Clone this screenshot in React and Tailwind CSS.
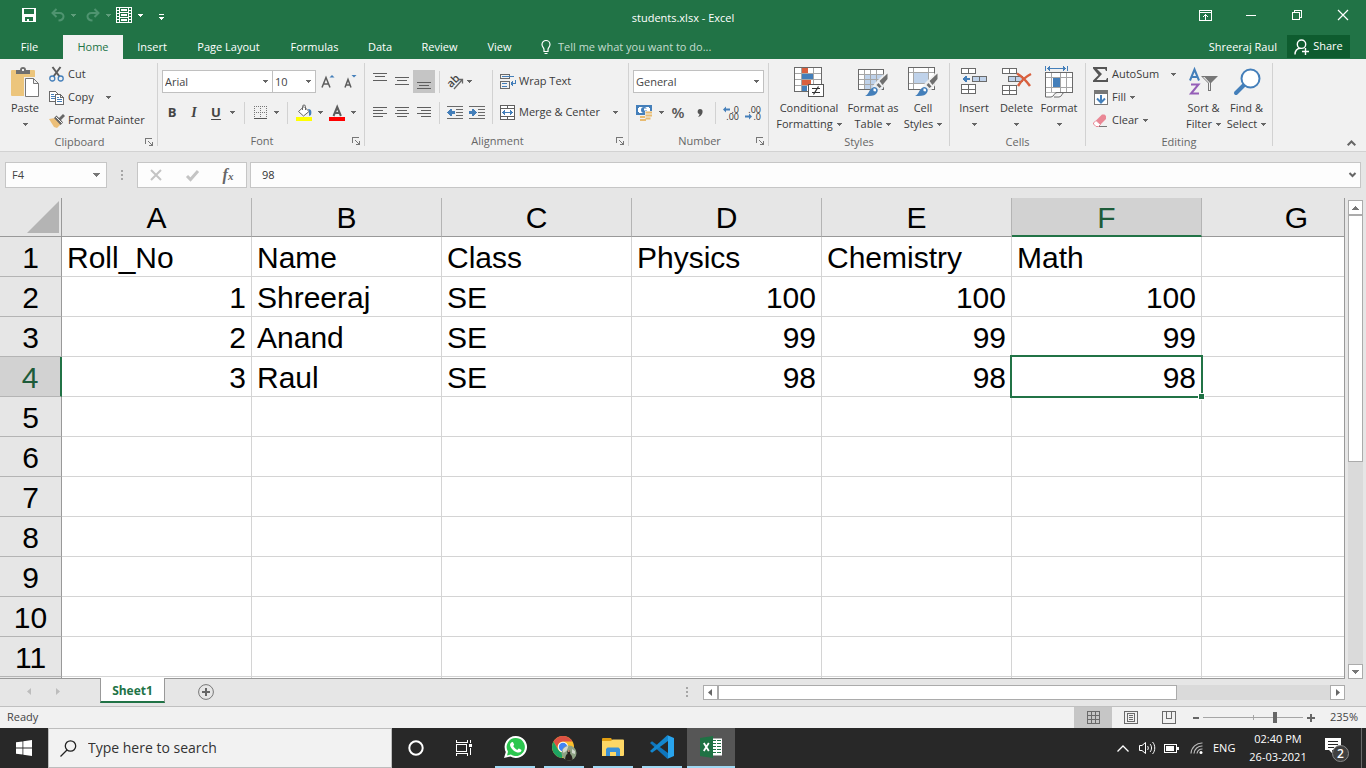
import React from "react";

function Svg({ w, h, crisp, children, className = "" }) {
  return (
    <svg
      width={w}
      height={h}
      viewBox={`0 0 ${w} ${h}`}
      fill="none"
      shapeRendering={crisp ? "crispEdges" : "auto"}
      className={`block shrink-0 overflow-visible ${className}`}
      aria-hidden="true"
    >
      {children}
    </svg>
  );
}

function Arrow({ color = "#666666" }) {
  return (
    <Svg w={5} h={3} crisp>
      <path d="M0 0h5v1H0zM1 1h3v1H1zM2 2h1v1H2z" fill={color} />
    </Svg>
  );
}

const G = "#6a6a6a";
const B = "#447fba";

/* ---------- title bar ---------- */

function TitleBar() {
  const btn = "flex h-[30px] w-[46px] items-center justify-center";
  return (
    <header className="grid h-[35px] grid-cols-[1fr_auto_1fr] text-white">
      <div className="flex h-[30px] items-center pl-[22px]">
        <button aria-label="Save" className="mr-[15px]">
          <Svg w={14} h={14} crisp>
            <path fillRule="evenodd" fill="#fff" d="M0 0h14v14H0zM2 1v5h10V1zM3 9v4h2v-2h2v2h4V9z" />
          </Svg>
        </button>
        <button aria-label="Undo" className="mr-[6px]">
          <Svg w={14} h={14}>
            <path d="M5.500 1 1.500 5l4 4M2 5h6.500c5.500 0 5.500 7-1 7.500" stroke="#4f9470" strokeWidth="2" />
          </Svg>
        </button>
        <button aria-label="Undo history" className="mr-[10px]"><Arrow color="#5f9d7b" /></button>
        <button aria-label="Redo" className="mr-[6px]">
          <Svg w={14} h={14}>
            <path d="m8.500 1 4 4-4 4M12 5H5.500C0 5 0 12 6.500 12.500" stroke="#4f9470" strokeWidth="2" />
          </Svg>
        </button>
        <button aria-label="Redo history" className="mr-[5px]"><Arrow color="#5f9d7b" /></button>
        <button aria-label="Table" className="mr-[6px]">
          <Svg w={16} h={16} crisp>
            <path stroke="#fff" d="M.5.5h15v15H.5zM3.500 0v16M12.500 0v16M3 5.500h10M3 10.500h10M0 3.500h3M0 6.500h3M0 9.500h3M0 12.500h3M13 3.500h3M13 6.500h3M13 9.500h3M13 12.500h3M5.500 2.500h5v1h-5zM5.500 7.500h5v1h-5zM5.500 12.500h5v1h-5z" />
          </Svg>
        </button>
        <button aria-label="Table options" className="mr-[16px]"><Arrow color="#fff" /></button>
        <button aria-label="Customize toolbar">
          <Svg w={5} h={6} crisp className="mt-1">
            <path d="M0 0h5v1H0zM0 3h5v1H0zM1 4h3v1H1zM2 5h1v1H2z" fill="#fff" />
          </Svg>
        </button>
      </div>
      <h1 className="pt-[9px] text-[11px] leading-[18px]">students.xlsx - Excel</h1>
      <div className="flex justify-end">
        <button aria-label="Ribbon display options" className={btn}>
          <Svg w={13} h={11} crisp>
            <path stroke="#fff" d="M.5.5h12v10H.5zM0 2.500h13M6.500 4v6M5 5.500h3M4 6.500h1M8 6.500h1" />
          </Svg>
        </button>
        <button aria-label="Minimize" className={btn}>
          <Svg w={10} h={1} crisp><path fill="#fff" d="M0 0h10v1H0z" /></Svg>
        </button>
        <button aria-label="Restore" className={btn}>
          <Svg w={10} h={10} crisp><path stroke="#fff" d="M.5 2.500h7v7h-7zM2.500 2V.5h7v7H8" /></Svg>
        </button>
        <button aria-label="Close" className={btn}>
          <Svg w={10} h={10}><path stroke="#fff" strokeWidth="1.200" d="m0 0 10 10M10 0 0 10" /></Svg>
        </button>
      </div>
    </header>
  );
}

function TabBar() {
  const tab = "flex h-6 items-center justify-center";
  return (
    <nav className="flex h-6 text-[11px] text-white">
      <button className={`${tab} mr-[4px] w-[59px]`}>File</button>
      <button className={`${tab} w-[60px] bg-[#f1f1f1] text-[#217346]`}>Home</button>
      <button className={`${tab} w-[58px]`}>Insert</button>
      <button className={`${tab} w-[95px]`}>Page Layout</button>
      <button className={`${tab} w-[77px]`}>Formulas</button>
      <button className={`${tab} w-[54px]`}>Data</button>
      <button className={`${tab} w-[65px]`}>Review</button>
      <button className={`${tab} w-[55px]`}>View</button>
      <button className={`${tab} ml-[14px] gap-[7px] text-[#c4dccf]`}>
        <Svg w={10} h={15}>
          <path stroke="#fff" strokeWidth="1.200" d="M3 9.500C3 7.500 1 7 1 4.500a4 4 0 0 1 8 0C9 7 7 7.500 7 9.500v2H3zM3.500 13.500h3" />
        </Svg>
        Tell me what you want to do...
      </button>
      <div className="ml-auto flex pr-4">
        <button className={`${tab} mr-[10px]`}>Shreeraj Raul</button>
        <button className="flex h-[23px] w-[63px] items-center justify-center gap-1 bg-[#0e5c2f]">
          <Svg w={15} h={16}>
            <path stroke="#fff" strokeWidth="1.400" d="M1 15.500C1 12 3 9.800 6 9.300M7.500 1a4.200 4.200 0 1 1 0 8.400 4.200 4.200 0 0 1 0-8.400zM11.500 9v7M8 12.500h7" />
          </Svg>
          Share
        </button>
      </div>
    </nav>
  );
}

/* ---------- ribbon ---------- */

function Group({ title, width, launcher, children }) {
  return (
    <section className={`flex h-[92px] shrink-0 items-start pt-1 ${width}`}>
      <div className="flex h-[88px] min-w-0 flex-1 flex-col">
        <div className="flex h-[71px]">{children}</div>
        <div className="flex items-center text-[11px] leading-5 text-[#666666]">
          <h2 className={`flex-1 text-center ${launcher ? "pl-[14px]" : ""}`}>{title}</h2>
          {launcher && (
            <button aria-label={`${title} settings`} className="mr-1">
              <Svg w={8} h={8} crisp>
                <path stroke="#777" d="M.5 6V.5H7M3 3l4 4M7.500 3.500v4h-4M6 6h1" />
              </Svg>
            </button>
          )}
        </div>
      </div>
      <span className="h-[83px] w-px bg-[#d2d2d2]" />
    </section>
  );
}

function Sep({ className = "mx-1" }) {
  return <span className={`h-[22px] w-px shrink-0 bg-[#d2d2d2] ${className}`} />;
}

function IconBtn({ label, pressed, children }) {
  return (
    <button
      aria-label={label}
      className={`flex h-[23px] w-[22px] shrink-0 items-center justify-center ${pressed ? "bg-[#c5c5c5]" : ""}`}
    >
      {children}
    </button>
  );
}

function ArrowBtn({ label, width = "w-[11px]" }) {
  return (
    <button aria-label={label} className={`flex h-[23px] shrink-0 items-center justify-center ${width}`}>
      <Arrow />
    </button>
  );
}

function Combo({ label, value, width }) {
  return (
    <label className={`flex h-[23px] items-center border border-[#c0c0c0] bg-white pr-1 ${width}`}>
      <span className="sr-only">{label}</span>
      <select className="min-w-0 flex-1 appearance-none bg-transparent pl-[2px] text-[11px] leading-4 text-[#444] outline-none">
        <option>{value}</option>
      </select>
      <Arrow />
    </label>
  );
}

function BigButton({ icon, lines, width, arrowBelow }) {
  return (
    <button className={`flex shrink-0 flex-col items-center text-[11px] leading-4 text-[#3b3b3b] ${width}`}>
      <span className="flex h-9 items-center justify-center">{icon}</span>
      <span className="whitespace-nowrap">{lines[0]}</span>
      <span className="flex h-4 items-center gap-1 whitespace-nowrap">
        {arrowBelow ? null : lines[1]}
        <Arrow />
      </span>
    </button>
  );
}

function SmallButton({ icon, text, arrow, gap = "gap-1" }) {
  return (
    <button className="flex h-[23px] items-center text-[11px] text-[#3b3b3b]">
      <span className="mr-1 flex w-[15px] justify-center">{icon}</span>
      <span className={`flex items-center whitespace-nowrap ${gap}`}>
        {text}
        {arrow && <Arrow />}
      </span>
    </button>
  );
}

const PasteIcon = (
  <Svg w={30} h={32}>
    <path fill="#ecc57c" d="M2 4h22a1 1 0 0 1 1 1v25H2a1 1 0 0 1-1-1V5a1 1 0 0 1 1-1z" />
    <path fill="#6f6f6f" d="M6 8V4h4c0-2 1-3 3-3s3 1 3 3h4v4z" />
    <path fill="#f1f1f1" d="M12 3h2v2h-2zM14 11h16v21H14z" />
    <path fill="#fff" stroke="#777" d="M15.500 12.500h8l5 5v13h-13zM23.500 12.500v5h5" />
  </Svg>
);

const CutIcon = (
  <Svg w={15} h={15}>
    <path stroke="#5d5d5d" strokeWidth="2" d="m3.500 0 7 9.500M11.500 0l-7 9.500" />
    <circle cx="3.300" cy="11.500" r="2.500" stroke={B} strokeWidth="1.300" />
    <circle cx="11.700" cy="11.500" r="2.500" stroke={B} strokeWidth="1.300" />
  </Svg>
);

const CopyIcon = (
  <Svg w={15} h={14} crisp>
    <path fill="#fff" stroke={G} d="M.5.5h6l2 2v8h-8z" />
    <path stroke={B} d="M2 3.500h3M2 5.500h4M2 7.500h4" />
    <path fill="#fff" stroke={G} d="M6.500 3.500h5l3 3v7h-8zM11.500 3.500v3h3" />
    <path stroke={B} d="M8 6.500h2M8 8.500h5M8 10.500h5" />
  </Svg>
);

const PainterIcon = (
  <Svg w={16} h={14}>
    <path fill="#ecbf79" d="m0 5 6-1 6 6-4 4-3-1z" />
    <path fill="#666" d="m5 4 2.500-2.500L10 4l4-4 2 2-4 4 2 2.500L11.500 11z" />
    <path stroke="#f1f1f1" d="m7 3 6 6" />
  </Svg>
);

function Clipboard() {
  return (
    <Group title="Clipboard" width="w-[158px]" launcher>
      <div className="flex pl-[5px] pt-px">
        <BigButton icon={PasteIcon} lines={["Paste"]} arrowBelow width="w-10" />
      </div>
      <div className="flex flex-col pl-[4px]">
        <SmallButton icon={CutIcon} text="Cut" />
        <SmallButton icon={CopyIcon} text="Copy" arrow gap="gap-3" />
        <SmallButton icon={PainterIcon} text="Format Painter" />
      </div>
    </Group>
  );
}

function FontGroup() {
  return (
    <Group title="Font" width="w-[207px]" launcher>
      <div className="flex flex-col gap-2 pl-[3px] pt-[7px]">
        <div className="flex pl-px">
          <Combo label="Font" value="Arial" width="w-[111px]" />
          <Combo label="Font size" value="10" width="-ml-px w-[44px]" />
          <div className="ml-px flex">
            <IconBtn label="Increase font size">
              <Svg w={14} h={14}>
                <path stroke="#5d5d5d" strokeWidth="1.500" d="M1 12.500 5 2.500l4 10M2.500 9h5.500" />
                <path fill={B} d="M8.500 2.500 11 0l2.500 2.500z" />
              </Svg>
            </IconBtn>
            <IconBtn label="Decrease font size">
              <Svg w={14} h={14}>
                <path stroke="#5d5d5d" strokeWidth="1.500" d="M2 12.500 5 4.500l3 8M3 10h4" />
                <path fill={B} d="M8.500 0h5L11 2.500z" />
              </Svg>
            </IconBtn>
          </div>
        </div>
        <div className="flex items-center text-[13px] text-[#444]">
          <IconBtn label="Bold"><b>B</b></IconBtn>
          <IconBtn label="Italic"><i className="font-['Liberation_Serif',serif] text-sm font-bold">I</i></IconBtn>
          <IconBtn label="Underline"><b className="underline underline-offset-2">U</b></IconBtn>
          <ArrowBtn label="Underline styles" />
          <Sep className="ml-[6px] mr-1" />
          <IconBtn label="Borders">
            <Svg w={13} h={13} crisp>
              <path stroke="#777" strokeDasharray="1 1" d="M.5 0v12M6.500 0v12M12.500 0v12M0 .5h13M0 6.500h13" />
              <path stroke="#555" d="M0 12.500h13" />
            </Svg>
          </IconBtn>
          <ArrowBtn label="Border styles" />
          <Sep className="mx-[5px]" />
          <IconBtn label="Fill color">
            <Svg w={16} h={16}>
              <path fill="#fff" stroke="#666" d="m2.500 6.500 5.500-5 5 5-5.500 4.500zM6.500 5V1.500a1.500 1.500 0 0 1 3 0V5" />
              <path fill={B} d="M12 4c3 0 4 2 3 6l-2 1V6z" />
              <path fill="#ffff00" d="M0 12h16v4H0z" />
            </Svg>
          </IconBtn>
          <ArrowBtn label="Fill colors" />
          <IconBtn label="Font color">
            <Svg w={16} h={16}>
              <path stroke="#5d5d5d" strokeWidth="2" d="m4.500 11 3.700-9 3.700 9M5.500 8h5" />
              <path fill="#ff0000" d="M0 12h16v4H0z" />
            </Svg>
          </IconBtn>
          <ArrowBtn label="Font colors" />
        </div>
      </div>
    </Group>
  );
}

function Lines({ d }) {
  return (
    <Svg w={14} h={21} crisp><path stroke="#5f5f5f" d={d} /></Svg>
  );
}

function Alignment() {
  return (
    <Group title="Alignment" width="w-[264px]" launcher>
      <div className="flex pl-[4px] pt-[7px]">
        <div className="flex flex-col gap-2">
          <div className="flex items-center">
            <IconBtn label="Top align"><Lines d="M0 2.500h14M2 5.500h10M0 9.500h14" /></IconBtn>
            <IconBtn label="Middle align"><Lines d="M0 6.500h14M2 9.500h10M0 13.500h14" /></IconBtn>
            <IconBtn label="Bottom align" pressed><Lines d="M0 11.500h14M2 14.500h10M0 17.500h14" /></IconBtn>
            <Sep />
            <IconBtn label="Orientation">
              <Svg w={16} h={16}>
                <text x="0" y="11" transform="rotate(-45 6 8)" fontSize="11" fill="#444" fontWeight="600">ab</text>
                <path stroke="#666" strokeWidth="1.300" d="m7 15 8-9M11.500 5.500h4v4" />
              </Svg>
            </IconBtn>
            <ArrowBtn label="Orientation options" width="w-[7px]" />
          </div>
          <div className="flex items-center">
            <IconBtn label="Align left"><Lines d="M0 5.500h14M0 8.500h10M0 11.500h14M0 14.500h10" /></IconBtn>
            <IconBtn label="Center"><Lines d="M0 5.500h14M2 8.500h10M0 11.500h14M2 14.500h10" /></IconBtn>
            <IconBtn label="Align right"><Lines d="M0 5.500h14M4 8.500h10M0 11.500h14M4 14.500h10" /></IconBtn>
            <Sep />
            <IconBtn label="Decrease indent">
              <Svg w={16} h={13} crisp>
                <path stroke={G} d="M0 .5h16M9 3.500h7M9 6.500h7M9 9.500h7M0 12.500h16" />
                <path fill={B} d="M0 6h1V5h1V4h1V3h2v2h3v3H5v2H3V9H2V8H1V7H0z" />
              </Svg>
            </IconBtn>
            <IconBtn label="Increase indent">
              <Svg w={16} h={13} crisp>
                <path stroke={G} d="M0 .5h16M9 3.500h7M9 6.500h7M9 9.500h7M0 12.500h16" />
                <path fill={B} d="M8 6H7V5H6V4H5V3H3v2H0v3h3v2h2V9h1V8h1V7h1z" />
              </Svg>
            </IconBtn>
          </div>
        </div>
        <span className="ml-[4px] h-[54px] w-px bg-[#d2d2d2]" />
        <div className="ml-[7px] flex flex-col gap-2">
          <SmallButton
            text="Wrap Text"
            icon={
              <Svg w={16} h={15} crisp>
                <path stroke={G} d="M.5.5h9v4h-9zM.5 7.500h9v7h-9z" />
                <path stroke={B} d="M2 2.500h12M2 9.500h5M2 12.500h5M15.500 6v3M11 9.500h5M12.500 7v5M11.500 8v3" />
              </Svg>
            }
          />
          <SmallButton
            text="Merge & Center"
            arrow
            gap="gap-[13px]"
            icon={
              <Svg w={15} h={15} crisp>
                <path fill="#fff" stroke="#5f5f5f" d="M.5.5h14v14H.5zM0 3.500h15M0 11.500h15M7.500 0v3M7.500 12v3" />
                <path stroke={B} d="M2 7.500h11M3.500 6v3M4.500 5v5M11.500 6v3M10.500 5v5" />
              </Svg>
            }
          />
        </div>
      </div>
    </Group>
  );
}

function NumberGroup() {
  return (
    <Group title="Number" width="w-[140px]" launcher>
      <div className="flex flex-col gap-2 pl-[4px] pt-[7px]">
        <Combo label="Number format" value="General" width="w-[131px]" />
        <div className="flex items-center text-[#555]">
          <IconBtn label="Accounting format">
            <Svg w={16} h={16}>
              <path fill={B} d="M0 0h16v10H0z" />
              <path fill="#fff" d="M3 2h10v1h1v4h-1v1H3V7H2V3h1z" />
              <circle cx="8" cy="5" r="3" fill={B} />
              <path fill="#fff" d="M8 3.500h3v2H8z" />
              <path fill="#f1f1f1" d="M9 6h8v10H3v-6h6z" />
              <path fill="#e8bb71" d="M9.500 6.500H16v2H9.500zM9.500 9.500H16v2H9.500zM9.500 12.500h5v2h-5zM4 11h5v2H4zM4 14h6v2H4z" />
            </Svg>
          </IconBtn>
          <ArrowBtn label="Accounting formats" width="w-3" />
          <IconBtn label="Percent style"><span className="text-[15px] font-semibold">%</span></IconBtn>
          <IconBtn label="Comma style">
            <Svg w={6} h={8}><path fill="#555" d="M3 0c3 0 3 3 2 5-1 1.500-2 2.500-4 3 1-1 1.500-2 1.500-3C0 5 0 0 3 0z" /></Svg>
          </IconBtn>
          <Sep />
          <IconBtn label="Increase decimal">
            <span className="flex w-4 flex-col items-end text-[9px] leading-[7px] text-[#333]">
              <span className="flex gap-px">
                <Svg w={7} h={7}><path fill={B} d="m0 3.500 3-3v2h4v2H3v2z" /></Svg>
                .0
              </span>
              <span>.00</span>
            </span>
          </IconBtn>
          <IconBtn label="Decrease decimal">
            <span className="flex w-4 flex-col items-end text-[9px] leading-[7px] text-[#333]">
              <span>.00</span>
              <span className="flex gap-px">
                <Svg w={7} h={7}><path fill={B} d="m7 3.500-3-3v2H0v2h4v2z" /></Svg>
                .0
              </span>
            </span>
          </IconBtn>
        </div>
      </div>
    </Group>
  );
}

const CondIcon = (
  <Svg w={30} h={30} crisp>
    <path fill="#fff" d="M0 0h28v25H0z" />
    <path stroke="#a6a6a6" d="M7.500 0v24M19.500 0v24M0 6.500h28M0 12.500h28M0 18.500h28" />
    <path stroke={G} d="M.5.5h27v24H.5z" />
    <path fill="#d9603e" d="M8 1h6v5H8zM8 13h9v5H8z" />
    <path fill={B} d="M8 7h11v5H8zM8 19h5v5H8z" />
    <path fill="#fff" stroke="#555" d="M14.500 17.500h15v12h-15z" />
    <path stroke="#333" d="M18 21.500h8M18 25.500h8" />
    <path shapeRendering="auto" stroke="#333" strokeWidth="1.200" d="m24.500 19.500-5 8" />
  </Svg>
);

const Brush = (
  <g>
    <path fill="#f1f1f1" d="m29 4-12 12-8 12 2 2 8-2 11-13z" opacity=".9" />
    <path fill="#6f6f6f" d="m29.500 6.500-8 7.500 3 4 5-6zM20.500 16l3 3.500-2 1.500-3-3z" />
    <path fill={B} d="M7 29c4-1 4-8 9-9 4 0 5 4 2 7-2 2-6 2-11 2z" />
    <path fill="#fff" d="M15.500 21.500c2-.5 3.500 1 2 3l-2-.5z" />
  </g>
);

const FormatTableIcon = (
  <Svg w={30} h={30}>
    <path fill="#fff" d="M.5 2.500h25v20H.5z" />
    <path fill="#bfd2ea" d="M7 8h18v14H7z" />
    <path shapeRendering="crispEdges" stroke="#a6a6a6" d="M6.500 3v19M12.500 3v19M18.500 3v19M1 7.500h24M1 12.500h24M1 17.500h24" />
    <path shapeRendering="crispEdges" stroke={G} d="M.5 2.500h25v20H.5z" />
    {Brush}
  </Svg>
);

const CellStylesIcon = (
  <Svg w={30} h={30}>
    <path fill="#fff" d="M.5.5h26v22H.5z" />
    <path fill="#bfd2ea" d="M6 6h15v11H6z" />
    <path shapeRendering="crispEdges" stroke="#a6a6a6" d="M5.500 1v21M20.500 1v21M1 5.500h25M1 16.500h25" />
    <path shapeRendering="crispEdges" stroke={G} d="M.5.5h26v22H.5z" />
    {Brush}
  </Svg>
);

function Styles() {
  return (
    <Group title="Styles" width="w-[181px]">
      <div className="flex pl-[4px] pt-px">
        <BigButton icon={CondIcon} lines={["Conditional", "Formatting"]} width="w-[72px]" />
        <BigButton icon={FormatTableIcon} lines={["Format as", "Table"]} width="w-[56px]" />
        <BigButton icon={CellStylesIcon} lines={["Cell", "Styles"]} width="w-[44px]" />
      </div>
    </Group>
  );
}

const InsertIcon = (
  <Svg w={28} h={30} crisp>
    <path fill="#fff" stroke={G} d="M1.500 1.500h14v5h-14zM8.500 1v6M1.500 17.500h14v9h-14zM8.500 17v10M1 22.500h15" />
    <path fill="#bfd2ea" stroke={G} d="M12.500 9.500h14v5h-14zM19.500 9v6" />
    <path fill={B} d="M2 12h1v-1h1v-1h1V9h2v2h3v2H7v2H5v-1H4v-1H3v-1z" />
  </Svg>
);

const DeleteIcon = (
  <Svg w={30} h={30} crisp>
    <path fill="#fff" stroke={G} d="M.5 1.500h14v5H.5zM7.500 1v6M.5 18.500h14v9H.5zM7.500 18v10M0 23.500h15" />
    <path fill="#bfd2ea" stroke={G} d="M6.500 9.500h14v5h-14zM13.500 9v6" />
    <path shapeRendering="auto" stroke="#d9603e" strokeWidth="2.500" d="M15 6.500c5 3 9 7 13 12.500M29 7c-6 3-10 7-13 12" />
  </Svg>
);

const FormatIcon = (
  <Svg w={29} h={32} crisp>
    <path stroke={B} d="M.5 0v5M22.500 0v5M2 2.500h19M3.500 1v3M4.500 0v5M19.500 1v3M18.500 0v5" />
    <path fill="#fff" d="M.5 6.500h27v20H.5z" />
    <path stroke="#a6a6a6" d="M6.500 7v19M15.500 7v19M21.500 7v19M1 11.500h26M1 21.500h26" />
    <path stroke={G} d="M.5 6.500h27v20H.5z" />
    <path fill={B} d="M8 12h7v9H8z" />
    <path shapeRendering="auto" fill="#fff" stroke={G} d="M.5 26.500V31H6c3 0 3-4.500 6-4.500M9 31h5c3 0 3-4.500 5-4.500" />
  </Svg>
);

function Cells() {
  return (
    <Group title="Cells" width="w-[136px]">
      <div className="flex pl-[3px] pt-px">
        <BigButton icon={InsertIcon} lines={["Insert"]} arrowBelow width="w-[42px]" />
        <BigButton icon={DeleteIcon} lines={["Delete"]} arrowBelow width="w-[43px]" />
        <BigButton icon={FormatIcon} lines={["Format"]} arrowBelow width="w-[42px]" />
      </div>
    </Group>
  );
}

function Editing() {
  return (
    <Group title="Editing" width="w-[187px]">
      <div className="flex flex-col pl-[7px]">
        <SmallButton
          text="AutoSum"
          arrow
          gap="gap-3"
          icon={<Svg w={15} h={15}><path fill="#555" d="M0 0h14v4h-1l-1-2H4l5 5-5.500 6H13l1-2h1v4H0v-1.500L5.500 8 0 1.500z" /></Svg>}
        />
        <SmallButton
          text="Fill"
          arrow
          icon={
            <Svg w={14} h={15} crisp>
              <path fill="#fff" stroke="#777" d="M.5.5h13v14H.5z" />
              <path fill="#777" d="M0 0h14v4H0z" />
              <path shapeRendering="auto" stroke={B} strokeWidth="2" d="M7 5v7M3 8.500l4 4 4-4" />
            </Svg>
          }
        />
        <SmallButton
          text="Clear"
          arrow
          icon={
            <Svg w={15} h={14}>
              <path fill="#ea8795" d="m3 6.500 6-6h2.500L13 2v3L7.500 10.500z" />
              <path stroke="#ea8795" fill="#fff" d="m3 6.500 4.500 4-2 2H3L.5 10V9z" />
              <path stroke="#777" d="M6 12.500h8" />
            </Svg>
          }
        />
      </div>
      <div className="ml-auto flex pr-1 pt-px">
        <BigButton
          lines={["Sort &", "Filter"]}
          width="w-[43px]"
          icon={
            <Svg w={30} h={28}>
              <path stroke={B} strokeWidth="2" d="M1 12.500 5.500 1.500l4.500 11M2.500 9H8.500" />
              <path stroke="#955fb8" strokeWidth="2" d="M2 16.500h7.500L2 25.500h8" />
              <path fill="#777" d="M12 8h17l-7 7v8h-3v-8z" />
              <path fill="#f1f1f1" d="M14 9h1.500l5.500 6v7h-1v-7z" />
            </Svg>
          }
        />
        <BigButton
          lines={["Find &", "Select"]}
          width="w-[43px]"
          icon={
            <Svg w={28} h={28}>
              <path stroke={B} strokeWidth="4" strokeLinecap="round" d="m3 25 8-8" />
              <circle cx="17.500" cy="10.500" r="9" fill="#fff" stroke={B} strokeWidth="2" />
            </Svg>
          }
        />
      </div>
    </Group>
  );
}

function Ribbon() {
  return (
    <div className="flex h-[93px] border-b border-[#d2d2d2] bg-[#f1f1f1]">
      <Clipboard />
      <FontGroup />
      <Alignment />
      <NumberGroup />
      <Styles />
      <Cells />
      <Editing />
      <button aria-label="Collapse ribbon" className="ml-auto mr-[10px] self-end pb-[5px]">
        <Svg w={9} h={6}><path stroke="#666" strokeWidth="2" d="m.7 5.300 3.800-3.800 3.800 3.800" /></Svg>
      </button>
    </div>
  );
}

/* ---------- formula bar ---------- */

function Dots() {
  return (
    <Svg w={2} h={10} crisp><path fill="#a6a6a6" d="M0 0h2v2H0zM0 4h2v2H0zM0 8h2v2H0z" /></Svg>
  );
}

function FormulaBar() {
  const box = "flex h-[26px] items-center border border-[#c6c6c6] bg-[#fdfdfd]";
  return (
    <div className="flex h-[46px] items-center pl-[5px] pr-[5px] text-[11px] text-[#444]">
      <label className={`${box} w-[102px] pr-[6px]`}>
        <span className="sr-only">Name Box</span>
        <input defaultValue="F4" className="min-w-0 flex-1 bg-transparent pl-[6px] text-[#444] outline-none" />
        <Svg w={7} h={4} crisp><path fill="#777" d="M0 0h7v1H0zM1 1h5v1H1zM2 2h3v1H2zM3 3h1v1H3z" /></Svg>
      </label>
      <span className="flex w-[30px] justify-center"><Dots /></span>
      <div className={`${box} mr-[3px] w-[110px]`}>
        <button aria-label="Cancel" className="flex w-9 justify-center">
          <Svg w={10} h={10}><path stroke="#c4c4c4" strokeWidth="2" d="m0 0 10 10M10 0 0 10" /></Svg>
        </button>
        <button aria-label="Enter" className="flex w-9 justify-center">
          <Svg w={13} h={11}><path stroke="#c4c4c4" strokeWidth="3" d="m1 6 3.500 3.500L12 1" /></Svg>
        </button>
        <button aria-label="Insert function" className="w-9 font-['Liberation_Serif',serif] text-base font-bold italic leading-5 text-[#666]">
          f<span className="text-[11px]">x</span>
        </button>
      </div>
      <label className={`${box} min-w-0 flex-1 pr-1`}>
        <span className="sr-only">Formula Bar</span>
        <input defaultValue="98" className="min-w-0 flex-1 bg-transparent pl-[11px] text-[#333] outline-none" />
        <Svg w={7} h={6}><path stroke="#666" strokeWidth="2" d="M.5 1 3.500 4l3-3" /></Svg>
      </label>
    </div>
  );
}

/* ---------- sheet ---------- */

const COLS = ["A", "B", "C", "D", "E", "F", "G"];
const DATA = [
  ["Roll_No", "Name", "Class", "Physics", "Chemistry", "Math"],
  [1, "Shreeraj", "SE", 100, 100, 100],
  [2, "Anand", "SE", 99, 99, 99],
  [3, "Raul", "SE", 98, 98, 98],
];
const ROWS = Array.from({ length: 12 }, (_, i) => i);

function Cell({ value, selected }) {
  return (
    <td
      className={`relative border-b border-r border-[#d4d4d4] px-[5px] pb-0 pt-[2px] ${
        typeof value === "number" ? "text-right" : "text-left"
      }`}
    >
      {value}
      {selected && (
        <span className="absolute -bottom-[2px] -left-[2px] -right-[2px] -top-[2px] z-10 border-2 border-[#217346]">
          <span className="absolute -bottom-[4px] -right-[4px] size-[7px] border border-white bg-[#217346]" />
        </span>
      )}
    </td>
  );
}

function Grid() {
  return (
    <div className="min-w-0 flex-1 overflow-hidden border-b border-r border-[#999999] bg-white">
      <table className="w-[1392px] table-fixed border-separate border-spacing-0 font-['Liberation_Sans',Arial,sans-serif] text-[30px] leading-8 text-black">
        <colgroup>
          <col className="w-[62px]" />
          {COLS.map((c) => <col key={c} className="w-[190px]" />)}
        </colgroup>
        <thead>
          <tr className="h-[39px]">
            <th className="border-b border-r border-[#999999] bg-[#e6e6e6] p-0">
              <Svg w={32} h={32} className="ml-auto mr-[2px]"><path fill="#b4b4b4" d="M32 0v32H0z" /></Svg>
            </th>
            {COLS.map((c) => (
              <th
                key={c}
                scope="col"
                className={`border-r border-r-[#b4b4b4] p-0 font-normal ${
                  c === "F"
                    ? "border-b-2 border-b-[#217346] bg-[#d2d2d2] pt-[3px] text-[#1e5c3a]"
                    : "border-b border-b-[#999999] bg-[#e6e6e6] pt-[2px]"
                }`}
              >
                {c}
              </th>
            ))}
          </tr>
        </thead>
        <tbody>
          {ROWS.map((r) => (
            <tr key={r} className="h-10">
              <th
                scope="row"
                className={`border-b border-b-[#b4b4b4] p-0 pt-[2px] font-normal ${
                  r === 3
                    ? "border-r-2 border-r-[#217346] bg-[#d2d2d2] text-[#1e5c3a]"
                    : "border-r border-r-[#999999] bg-[#e6e6e6]"
                }`}
              >
                {r < 11 ? r + 1 : null}
              </th>
              {COLS.map((c, i) => (
                <Cell key={c} value={DATA[r]?.[i]} selected={r === 3 && c === "F"} />
              ))}
            </tr>
          ))}
        </tbody>
      </table>
    </div>
  );
}

function VerticalScroll() {
  const end = "flex size-[15px] shrink-0 items-center justify-center border border-[#ababab] bg-white";
  return (
    <div className="flex w-[21px] shrink-0 flex-col pl-[3px] pt-[2px]">
      <button aria-label="Scroll up" className={end}>
        <Svg w={7} h={4} crisp><path fill="#777" d="M3 0h1v1H3zM2 1h3v1H2zM1 2h5v1H1zM0 3h7v1H0z" /></Svg>
      </button>
      <div className="w-[15px] flex-1 bg-[#dadada]">
        <div className="h-[55%] border border-[#ababab] bg-white" />
      </div>
      <button aria-label="Scroll down" className={end}>
        <Svg w={7} h={4} crisp><path fill="#777" d="M0 0h7v1H0zM1 1h5v1H1zM2 2h3v1H2zM3 3h1v1H3z" /></Svg>
      </button>
    </div>
  );
}

function SheetTabs() {
  const end = "flex size-[15px] shrink-0 items-center justify-center border border-[#ababab] bg-white";
  return (
    <div className="flex h-[27px] shrink-0">
      <div className="flex min-w-0 flex-1 items-start">
        <button aria-label="Previous sheet" className="ml-[27px] mt-[9px]">
          <Svg w={4} h={7}><path fill="#bdbdbd" d="M4 0v7L0 3.500z" /></Svg>
        </button>
        <button aria-label="Next sheet" className="ml-[25px] mt-[9px]">
          <Svg w={4} h={7}><path fill="#bdbdbd" d="M0 0v7l4-3.500z" /></Svg>
        </button>
        <button className="-mt-px ml-10 h-[25px] w-[65px] border-x border-b-2 border-x-[#999999] border-b-[#217346] bg-white pt-px text-xs font-bold leading-6 text-[#217346]">
          Sheet1
        </button>
        <button aria-label="New sheet" className="ml-[33px] mt-[5px]">
          <Svg w={16} h={16}>
            <circle cx="8" cy="8" r="7.400" stroke="#777" />
            <path stroke="#666" strokeWidth="2" d="M8 4v8M4 8h8" />
          </Svg>
        </button>
        <span className="ml-auto mr-[15px] mt-2"><Dots /></span>
      </div>
      <div className="mr-[21px] mt-[6px] flex h-[15px] w-[47%]">
        <button aria-label="Scroll left" className={end}>
          <Svg w={4} h={7}><path fill="#666" d="M4 0v7L0 3.500z" /></Svg>
        </button>
        <div className="flex-1 bg-[#dadada]">
          <div className="h-full w-3/4 border border-[#ababab] bg-white" />
        </div>
        <button aria-label="Scroll right" className={end}>
          <Svg w={4} h={7}><path fill="#666" d="M0 0v7l4-3.500z" /></Svg>
        </button>
      </div>
    </div>
  );
}

function StatusBar() {
  const view = "flex w-[38px] items-center justify-center";
  return (
    <div className="flex h-[22px] shrink-0 items-stretch border-t border-[#c0c0c0] bg-[#f1f1f1] pr-2 text-[11px] leading-5 text-[#444]">
      <span className="pl-[7px]">Ready</span>
      <div className="ml-auto flex">
        <button aria-label="Normal view" className={`${view} bg-[#c6c6c6]`}>
          <Svg w={13} h={13} crisp><path stroke={G} d="M.5.5h12v12H.5zM4.500 0v13M8.500 0v13M0 4.500h13M0 8.500h13" /></Svg>
        </button>
        <button aria-label="Page layout view" className={view}>
          <Svg w={14} h={13} crisp><path stroke={G} d="M.5.5h13v12H.5zM3.500 2.500h7v8h-7zM5 4.500h4M5 6.500h4M5 8.500h4" /></Svg>
        </button>
        <button aria-label="Page break view" className={view}>
          <Svg w={14} h={13} crisp><path stroke={G} d="M.5.5h13v12H.5zM4.500 0v7M9.500 0v7M4 7.500h6" /></Svg>
        </button>
      </div>
      <button aria-label="Zoom out" className="flex w-[15px] items-center justify-center">
        <Svg w={6} h={2} crisp><path fill="#666" d="M0 0h6v2H0z" /></Svg>
      </button>
      <label className="relative flex items-center">
        <span className="sr-only">Zoom</span>
        <span className="absolute left-[50px] h-[5px] w-px bg-[#a6a6a6]" />
        <input
          type="range"
          min="0"
          max="100"
          defaultValue="73"
          className="h-px w-[100px] appearance-none bg-[#a6a6a6] [&::-webkit-slider-thumb]:relative [&::-webkit-slider-thumb]:h-[11px] [&::-webkit-slider-thumb]:w-1 [&::-webkit-slider-thumb]:appearance-none [&::-webkit-slider-thumb]:bg-[#666666]"
        />
      </label>
      <button aria-label="Zoom in" className="flex w-4 items-center justify-center">
        <Svg w={8} h={8} crisp><path fill="#666" d="M3 0h2v3h3v2H5v3H3V5H0V3h3z" /></Svg>
      </button>
      <span className="w-[39px] text-right">235%</span>
    </div>
  );
}

/* ---------- taskbar ---------- */

function TaskButton({ label, running, active, children }) {
  return (
    <button
      aria-label={label}
      className={`flex h-10 w-12 flex-col items-center ${active ? "bg-[#565656]" : ""}`}
    >
      <span className="flex flex-1 items-center">{children}</span>
      {running && <span className={`h-[2px] bg-[#9fd8f3] ${active ? "w-full" : "w-10"}`} />}
    </button>
  );
}

function Taskbar() {
  return (
    <footer className="flex h-10 shrink-0 bg-[#282828] text-white">
      <TaskButton label="Start">
        <Svg w={16} h={16}><path fill="#fff" d="M0 2.300 6.500 1.400v6.100H0zM7.300 1.300 16 0v7.500H7.300zM0 8.400h6.500v6.200L0 13.700zM7.300 8.400H16V16l-8.700-1.300z" /></Svg>
      </TaskButton>
      <label className="flex w-[344px] items-center gap-[11px] border border-[#bdbdbd] bg-[#f2f2f2] pl-[11px]">
        <Svg w={17} h={17}>
          <circle cx="10.500" cy="6" r="5.200" stroke="#222" strokeWidth="1.300" />
          <path stroke="#222" strokeWidth="1.300" d="m7 10-6.500 6.500" />
        </Svg>
        <span className="sr-only">Search</span>
        <input
          type="search"
          placeholder="Type here to search"
          className="min-w-0 flex-1 bg-transparent text-sm text-[#333] outline-none placeholder:text-[#333]"
        />
      </label>
      <TaskButton label="Cortana">
        <Svg w={16} h={16}><circle cx="8" cy="8" r="6.700" stroke="#fff" strokeWidth="2" /></Svg>
      </TaskButton>
      <TaskButton label="Task view">
        <Svg w={16} h={16} crisp>
          <path stroke="#fff" d="M.5 0v2.500h11V0M.5 4.500h10v7H.5zM.5 16v-2.500h11V16M14.500 0v3M14.500 8v7" />
          <path fill="#fff" d="M13 4h3v3h-3z" />
        </Svg>
      </TaskButton>
      <div className="ml-[3px] flex gap-px">
        <TaskButton label="WhatsApp" running>
          <Svg w={24} h={24}>
            <path fill="#fff" d="M12.500 1a11 11 0 1 1-5 20.500L1 23l1.800-6A11 11 0 0 1 12.500 1z" />
            <path fill="#2cc64f" d="M12.500 3a9 9 0 1 1-4.600 16.500L4 20.500l1-3.800A9 9 0 0 1 12.500 3z" />
            <path fill="#fff" d="M8.700 7.200c.8-.5 1.400-.2 1.700.7l.7 1.600c.1.600-.5 1.100-.9 1.600 1 1.900 2.300 3 4.200 3.800.5-.6 1-1.500 1.600-1.300l2.200 1.100c.5.300.2 1.500-.4 2.100-1.200 1-2.700 1-4.800.1-2.800-1.200-4.600-3.400-5.700-5.700-.7-1.600 0-3.200 1.400-4z" />
          </Svg>
        </TaskButton>
        <TaskButton label="Chrome" running>
          <Svg w={24} h={24}>
            <circle cx="11" cy="12" r="11" fill="#fbc02d" />
            <path fill="#dd5144" d="M1.500 6.500a11 11 0 0 1 19 0H11a5.500 5.500 0 0 0-4.800 8.200z" />
            <path fill="#1da362" d="M1.500 6.500 6.200 14.700A5.500 5.500 0 0 0 12 17.400L10 23A11 11 0 0 1 1.500 6.500z" />
            <circle cx="11" cy="12" r="5.200" fill="#fff" />
            <circle cx="11" cy="12" r="4.200" fill="#4285f4" />
            <circle cx="17" cy="18" r="7.500" fill="#8da184" />
            <path fill="#d3d9ce" d="M10.500 15c2-3 4-4 6-4l-2 5-3 2zM20 14l3 2v3l-3-1z" />
            <path fill="#28221f" d="M13 24.500c.5-4 1.500-5.500 2.500-5.500-.5-3 0-4 1.300-4s1.700 1.500 1.300 4c1.500 1 2 2.500 2.500 5.500-2.500 1.200-5 1.200-7.600 0z" />
            <circle cx="16.800" cy="16" r="1" fill="#c9957a" />
          </Svg>
        </TaskButton>
        <TaskButton label="File Explorer" running>
          <Svg w={22} h={18}>
            <path fill="#e3a012" d="M0 1a1 1 0 0 1 1-1h8l1 1.500V4H0z" />
            <path fill="#fed765" d="M0 3h9l1.500-1.500H21a1 1 0 0 1 1 1V17a1 1 0 0 1-1 1H0z" />
            <path fill="#3b91d7" d="M4 18v-7l1.500-1.500h11L18 11v7h-4v-4H8v4z" />
          </Svg>
        </TaskButton>
        <TaskButton label="Visual Studio Code" running>
          <Svg w={24} h={24}>
            <path fill="#0f76bd" d="m0 8 2-1.800L18 18v5.500h-1z" />
            <path fill="#1387cf" d="m0 16 2 1.800L18 6V.5h-1z" />
            <path fill="#29a4ed" d="m17 0 7 3v18l-7 3c.6-.2 1-.7 1-1.500v-21c0-.8-.4-1.300-1-1.500z" />
          </Svg>
        </TaskButton>
        <TaskButton label="Excel" running active>
          <Svg w={22} h={22}>
            <path fill="#fff" d="M12 2.500h10v17H12z" />
            <path stroke="#217346" shapeRendering="crispEdges" d="M13 4.500h3M17 4.500h4M13 7.500h3M17 7.500h4M13 10.500h3M17 10.500h4M13 13.500h3M17 13.500h4M13 16.500h3M17 16.500h4" strokeWidth="1" />
            <path fill="#1f7244" d="m0 2 13-2v22L0 20z" />
            <path stroke="#fff" strokeWidth="1.800" d="m3.800 7 5 8M8.800 7l-5 8" />
          </Svg>
        </TaskButton>
      </div>
      <div className="ml-auto flex items-center text-[11px] leading-[18px]">
        <button aria-label="Show hidden icons" className="mr-[10px]">
          <Svg w={12} h={7}><path stroke="#fff" strokeWidth="1.300" d="m.5 6.500 5.500-5.500 5.500 5.500" /></Svg>
        </button>
        <button aria-label="Volume" className="mr-2">
          <Svg w={17} h={14}>
            <path stroke="#fff" d="M.5 4.500h2.500L6.500 1.500v11L3 9.500H.5zM8.500 5c1 1 1 3 0 4M11 3c2 2 2 6 0 8M13.500 1c3 3 3 9 0 12" />
          </Svg>
        </button>
        <button aria-label="Battery" className="mr-[11px]">
          <Svg w={15} h={9} crisp>
            <path stroke="#fff" d="M.5.5h12v8H.5zM14 3v3" />
            <path fill="#fff" d="M2 2h8v5H2zM13 3h2v3h-2z" />
          </Svg>
        </button>
        <button aria-label="Network" className="mr-[10px]">
          <Svg w={13} h={12}>
            <path stroke="#bbb" strokeWidth="1.200" d="M1 11.500A11 11 0 0 1 12.500 1M4 11.500A8 8 0 0 1 12.500 4M7 11.500A5.500 5.500 0 0 1 12.500 7" />
            <circle cx="11" cy="10.500" r="1.500" fill="#fff" />
          </Svg>
        </button>
        <button className="w-6 text-left">ENG</button>
        <button className="ml-[8px] w-[66px] text-center">
          <time className="block">02:40 PM</time>
          <time className="block">26-03-2021</time>
        </button>
        <button aria-label="Notifications, 2 new" className="ml-[14px] mr-[11px] mt-1">
          <Svg w={25} h={25}>
            <path fill="#fff" d="M0 0h16v12H7v3l-3-3H0z" />
            <path stroke="#282828" d="M3 3.500h10M3 6.500h10M3 9.500h6" />
            <circle cx="15.500" cy="15.500" r="8" fill="#404040" stroke="#8a8a8a" />
            <text x="12" y="20" fontSize="12" fontWeight="600" fill="#fff">2</text>
          </Svg>
        </button>
        <span className="mr-1 h-10 w-px bg-[#6a6a6a]" />
      </div>
    </footer>
  );
}

export default function App() {
  return (
    <div className="flex h-screen flex-col overflow-hidden bg-[#e6e6e6] font-['Open_Sans','Noto_Sans',sans-serif]">
      <div className="shrink-0 bg-[#217346]">
        <TitleBar />
        <TabBar />
      </div>
      <div className="shrink-0">
        <Ribbon />
        <FormulaBar />
      </div>
      <main className="flex min-h-0 flex-1">
        <Grid />
        <VerticalScroll />
      </main>
      <SheetTabs />
      <StatusBar />
      <Taskbar />
    </div>
  );
}
